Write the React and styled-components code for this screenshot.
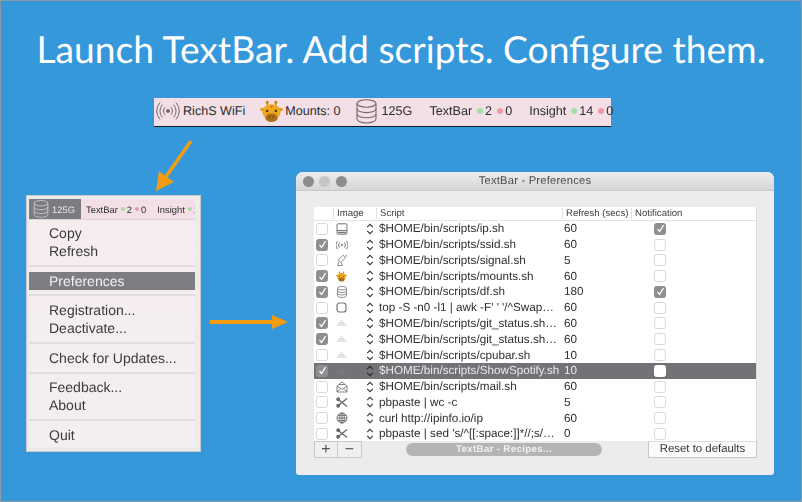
import React from 'react';
import styled, { createGlobalStyle } from 'styled-components';

const GlobalStyle = createGlobalStyle`
  html, body {
    margin: 0;
    padding: 0;
    background: #3498db;
  }
  * {
    box-sizing: border-box;
  }
`;

const Page = styled.div`
  position: relative;
  width: 802px;
  height: 502px;
  border: 1px solid #8e9aa3;
  background: #3498db;
  font-family: 'Liberation Sans', Arial, sans-serif;
  text-rendering: geometricPrecision;
  overflow: hidden;
`;

const Title = styled.h1`
  margin: 0;
  padding: 26px 0 26px;
  height: 97px;
  font-family: Lato, sans-serif;
  font-weight: 400;
  font-size: 37.2px;
  line-height: 44px;
  color: #fff;
  text-align: center;
  white-space: nowrap;
`;

const Strip = styled.div`
  display: flex;
  align-items: center;
  width: 457px;
  height: 29px;
  margin-left: 153px;
  padding-bottom: 2px;
  background: #f3e0e6;
  border-bottom: 1px solid #1c1c1c;
  font-size: 12.6px;
  color: #2c2c2c;
  filter: blur(0.3px);
`;

const StripText = styled.span`
  flex: none;
  margin-left: ${({ $gap }) => $gap || 0}px;
  white-space: nowrap;
`;

const IconWrap = styled.div`
  display: flex;
  flex: none;
  margin-left: ${({ $gap }) => $gap || 0}px;
`;

const Dot = styled.i`
  flex: none;
  width: ${({ $small }) => ($small ? 4 : 6)}px;
  height: ${({ $small }) => ($small ? 4 : 6)}px;
  margin: 0 2px 0 ${({ $small }) => ($small ? 3 : 5)}px;
  border-radius: 50%;
  background: ${({ $red }) => ($red ? '#f19aa6' : '#a3dfa3')};
`;

const Lower = styled.div`
  display: flex;
  align-items: flex-start;
  margin-top: 45px;
  padding-left: 25px;
`;

/* popup menu */
const Popup = styled.div`
  flex: none;
  width: 175px;
  height: 257px;
  margin-top: 23px;
  padding: 3px 5px 4px 2px;
  border: 1px solid #c9c9cb;
  background: #ececec;
  filter: blur(0.3px);
`;

const MenuPanel = styled.div`
  height: 248px;
  border-radius: 0 0 4px 4px;
  background: linear-gradient(#f6ecee, #f3efef);
  overflow: hidden;
`;

const PopupBar = styled.div`
  display: flex;
  align-items: center;
  height: 21px;
  background: #f3e0e6;
  border-bottom: 1px solid #d9d2d6;
  font-size: 9.4px;
  color: #2e2e2e;
  overflow: hidden;
  white-space: nowrap;
`;

const ActiveItem = styled.div`
  display: flex;
  align-items: center;
  gap: 3px;
  flex: none;
  width: 52px;
  height: 21px;
  padding-left: 4px;
  margin-right: 5px;
  background: #7b7b80;
  color: #e8e8e8;
`;

const MenuList = styled.div`
  padding-top: 4px;
`;

const MenuItem = styled.div`
  height: 18px;
  padding-left: 20px;
  font-size: 14px;
  line-height: 18px;
  color: ${({ $active }) => ($active ? '#f2f2f2' : '#3b3a3c')};
  background: ${({ $active }) => ($active ? '#7d7d82' : 'transparent')};
`;

const MenuSep = styled.div`
  height: 11.6px;
  display: flex;
  align-items: center;
  &::after {
    content: '';
    width: 100%;
    height: 2px;
    background: #e2dcdd;
  }
`;

const SideArrow = styled.svg`
  flex: none;
  width: 78px;
  height: 14px;
  margin: 143px 8px 0 9px;
`;

const DownArrow = styled.svg`
  position: absolute;
  left: 152px;
  top: 137px;
  width: 42px;
  height: 54px;
`;

/* preferences window */
const Win = styled.div`
  flex: none;
  width: 478px;
  height: 303px;
  background: #ececec;
  border-radius: 7px 7px 3px 3px;
  overflow: hidden;
  filter: blur(0.3px);
`;

const WinBar = styled.div`
  position: relative;
  display: flex;
  align-items: center;
  justify-content: center;
  height: 19px;
  background: linear-gradient(#ececec, #d6d6d6);
  border-bottom: 1px solid #c9c9c9;
  font-size: 11.2px;
  letter-spacing: 0.2px;
  color: #4c4c4c;
`;

const Lights = styled.div`
  position: absolute;
  left: 6.5px;
  top: 4px;
  display: flex;
  gap: 5.5px;
`;

const Light = styled.i`
  width: 11px;
  height: 11px;
  border-radius: 50%;
  background: ${({ $dim }) => ($dim ? '#c6c6c6' : '#8d8d8f')};
`;

const WinBody = styled.div`
  padding: 16px 17px 0 18px;
`;

const Table = styled.div`
  background: #fff;
  height: 234px;
  border-right: 1px solid #dcdcdc;
`;

const Columns = styled.div`
  display: grid;
  grid-template-columns: 19px 43px 186px 69px 126px;
  align-items: center;
`;

const Head = styled(Columns)`
  height: 14px;
  border-bottom: 1px solid #e4e4e4;
  font-size: 9.6px;
  color: #3e3e3e;
`;

const HeadCell = styled.span`
  height: 11px;
  line-height: 11px;
  padding-left: 3px;
  border-left: ${({ $first }) => ($first ? 'none' : '1px solid #e2e2e2')};
  white-space: nowrap;
`;

const Row = styled(Columns)`
  height: 15.77px;
  font-size: 11.7px;
  color: ${({ $selected }) => ($selected ? '#e9e9ea' : '#2f2f2f')};
  background: ${({ $selected }) => ($selected ? '#737377' : 'transparent')};
`;

const CheckCell = styled.div`
  display: flex;
  align-items: center;
  padding-left: ${({ $notify }) => ($notify ? '23px' : '2px')};
`;

const Box = styled.div`
  display: flex;
  align-items: center;
  justify-content: center;
  width: 12px;
  height: 12px;
  border-radius: 2.5px;
  border: 1px solid ${({ $on, $white }) => ($white ? '#fff' : $on ? '#8f8e93' : '#d8d8d8')};
  background: ${({ $on, $white }) => ($white ? '#fff' : $on ? '#8f8e93' : '#fff')};
`;

const ImageCell = styled.div`
  display: flex;
  align-items: center;
  padding-left: 2px;
  gap: 18px;
`;

const IconSlot = styled.div`
  display: flex;
  align-items: center;
  justify-content: center;
  flex: none;
  width: 13px;
  height: 13px;
`;

const ScriptCell = styled.div`
  padding-left: 3px;
  white-space: nowrap;
  overflow: hidden;
`;

const NumberCell = styled.div`
  padding-left: 2px;
`;

const BottomBar = styled.div`
  display: flex;
  align-items: flex-start;
  height: 17px;
`;

const SquareButton = styled.div`
  display: flex;
  align-items: center;
  justify-content: center;
  width: ${({ $wide }) => ($wide ? 25 : 24)}px;
  height: 17px;
  margin-left: ${({ $wide }) => ($wide ? -1 : 0)}px;
  background: #f0f0f0;
  border: 1px solid #c8c8c8;
  font-size: 16px;
  color: #555;
`;

const RecipesPill = styled.div`
  width: 196px;
  height: 13px;
  margin: 2px 0 0 44px;
  border-radius: 7px;
  background: #b4b4b4;
  color: #f0f0f0;
  font-size: 9.8px;
  font-weight: bold;
  letter-spacing: 0.3px;
  line-height: 13px;
  text-align: center;
`;

const ResetButton = styled.div`
  width: 109px;
  height: 17px;
  margin-left: auto;
  background: #fbfbfb;
  border: 1px solid #c8c8c8;
  border-top-color: #dedede;
  font-size: 11.4px;
  line-height: 15px;
  color: #333;
  text-align: center;
`;

/* drawings */
const WifiIcon = () => (
  <svg width="24" height="22" viewBox="0 0 24 22" fill="none" stroke="#77666c" strokeWidth="1" strokeLinecap="round">
    <circle cx="12" cy="11" r="1.5" fill="#77666c" />
    <path d="M8.8 7.5a5 5 0 0 0 0 7M15.2 7.5a5 5 0 0 1 0 7" />
    <path d="M6.2 5a8.6 8.6 0 0 0 0 12M17.8 5a8.6 8.6 0 0 1 0 12" />
    <path d="M3.8 2.8a12 12 0 0 0 0 16.4M20.2 2.8a12 12 0 0 1 0 16.4" />
  </svg>
);

const GiraffeIcon = ({ size = 23 }) => (
  <svg width={size} height={size} viewBox="0 0 24 24">
    <circle cx="7.5" cy="2.5" r="1.6" fill="#c97f12" />
    <circle cx="16.5" cy="2.5" r="1.6" fill="#c97f12" />
    <rect x="6.8" y="3" width="1.5" height="5" fill="#d98f16" />
    <rect x="15.8" y="3" width="1.5" height="5" fill="#d98f16" />
    <ellipse cx="2.8" cy="10" rx="2.8" ry="1.8" fill="#e39c1c" />
    <ellipse cx="21.2" cy="10" rx="2.8" ry="1.8" fill="#e39c1c" />
    <ellipse cx="12" cy="12.5" rx="9.5" ry="8" fill="#efa81f" />
    <circle cx="12" cy="7" r="1.3" fill="#c97f12" />
    <circle cx="7.5" cy="11.5" r="1.3" fill="#4a3312" />
    <circle cx="16.5" cy="11.5" r="1.3" fill="#4a3312" />
    <ellipse cx="12" cy="18.5" rx="6.5" ry="4.5" fill="#a9701c" />
    <circle cx="10" cy="17.5" r="0.7" fill="#4a3312" />
    <circle cx="14" cy="17.5" r="0.7" fill="#4a3312" />
  </svg>
);

const DbIcon = ({ width = 21, height = 25, color = '#77666c', stroke = 1.1 }) => (
  <svg width={width} height={height} viewBox="0 0 21 25" fill="none" stroke={color} strokeWidth={stroke}>
    <ellipse cx="10.5" cy="4.5" rx="9.5" ry="3.7" />
    <path d="M1 4.5v15.6c0 2.1 4.2 3.9 9.5 3.9s9.5-1.8 9.5-3.9V4.5" />
    <path d="M1 9.8c0 2.1 4.2 3.8 9.5 3.8s9.5-1.7 9.5-3.8" />
    <path d="M1 15c0 2.1 4.2 3.8 9.5 3.8s9.5-1.7 9.5-3.8" />
  </svg>
);

const Stepper = ({ color = '#333' }) => (
  <svg width="8" height="12" viewBox="0 0 8 12" fill="none" stroke={color} strokeWidth="1.1">
    <path d="M1.2 4.2 4 1.4l2.8 2.8M1.2 7.8 4 10.6l2.8-2.8" />
  </svg>
);

const CheckMark = ({ color = '#fff' }) => (
  <svg width="9" height="9" viewBox="0 0 9 9" fill="none" stroke={color} strokeWidth="1.2">
    <path d="M1.5 5 3.6 7.4 7.6 1.2" />
  </svg>
);

const rowIcons = {
  disk: (
    <svg width="12" height="12" viewBox="0 0 12 12" fill="none" stroke="#77777b">
      <rect x="1" y="0.8" width="10" height="10.4" rx="1" />
      <path d="M1 7.5h10" />
      <path d="M2 9.4h8" strokeWidth="1.5" />
    </svg>
  ),
  wifi: (
    <svg width="12" height="10" viewBox="0 0 12 10" fill="none" stroke="#9c9ca0" strokeWidth="1.2">
      <circle cx="6" cy="5" r="0.7" fill="#9c9ca0" />
      <path d="M3.8 2.5a3.6 3.6 0 0 0 0 5M8.2 2.5a3.6 3.6 0 0 1 0 5M1.6 1a6.4 6.4 0 0 0 0 8M10.4 1a6.4 6.4 0 0 1 0 8" />
    </svg>
  ),
  signal: (
    <svg width="12" height="13" viewBox="0 0 12 13" fill="none" stroke="#808084" strokeWidth="0.9">
      <path d="M7 1.2l2.6 2.4-4.8 5-2.6-2.4zM3 7.5 1.5 11.6h5L5.2 8.6M9.5 1a2 2 0 0 1 1.5 1.6" />
    </svg>
  ),
  giraffe: <GiraffeIcon size={11} />,
  db: <DbIcon width={10} height={12} color="#77777b" stroke={1.7} />,
  square: (
    <svg width="11" height="11" viewBox="0 0 11 11" fill="none" stroke="#77777b" strokeWidth="1.2">
      <rect x="1" y="1" width="9" height="9" rx="2.6" />
    </svg>
  ),
  dots: (
    <svg width="11" height="6" viewBox="0 0 11 6" fill="none" stroke="#a6a6a9">
      <path d="M4.5 1h2M2.5 3h6M1 5h9" strokeDasharray="1 0.6" />
    </svg>
  ),
  dim: (
    <svg width="11" height="6" viewBox="0 0 11 6" fill="none" stroke="#828286">
      <path d="M4.5 1h2M2.5 3h6M1 5h9" strokeDasharray="1 0.6" />
    </svg>
  ),
  mail: (
    <svg width="12" height="12" viewBox="0 0 12 12" fill="none" stroke="#77777b" strokeWidth="0.9">
      <path d="M1 5 6 1l5 4v6H1zM1 5l5 3.4L11 5M1 11l3.6-4M11 11 7.4 7M3 3.5h6" />
    </svg>
  ),
  cut: (
    <svg width="12" height="11" viewBox="0 0 12 11" fill="none" stroke="#68686c" strokeWidth="1.3">
      <path d="M3 3 11 9.5M3 8 11 1.5" />
      <circle cx="2.2" cy="2.2" r="1.3" fill="#68686c" />
      <circle cx="2.2" cy="8.8" r="1.3" fill="#68686c" />
    </svg>
  ),
  globe: (
    <svg width="12" height="12" viewBox="0 0 12 12" fill="none" stroke="#68686c" strokeWidth="0.9">
      <circle cx="6" cy="6" r="5" />
      <ellipse cx="6" cy="6" rx="2.3" ry="5" />
      <path d="M6 1v10M1 6h10M1.8 3.4h8.4M1.8 8.6h8.4" />
    </svg>
  ),
};

const rows = [
  { on: false, icon: 'disk', script: '$HOME/bin/scripts/ip.sh', secs: '60', notify: true },
  { on: true, icon: 'wifi', script: '$HOME/bin/scripts/ssid.sh', secs: '60' },
  { on: false, icon: 'signal', script: '$HOME/bin/scripts/signal.sh', secs: '5' },
  { on: true, icon: 'giraffe', script: '$HOME/bin/scripts/mounts.sh', secs: '60' },
  { on: true, icon: 'db', script: '$HOME/bin/scripts/df.sh', secs: '180', notify: true },
  { on: false, icon: 'square', script: "top -S -n0 -l1 | awk -F' ' '/^Swap…", secs: '60' },
  { on: true, icon: 'dots', script: '$HOME/bin/scripts/git_status.sh…', secs: '60' },
  { on: true, icon: 'dots', script: '$HOME/bin/scripts/git_status.sh…', secs: '60' },
  { on: false, icon: 'dots', script: '$HOME/bin/scripts/cpubar.sh', secs: '10' },
  { on: true, icon: 'dim', script: '$HOME/bin/scripts/ShowSpotify.sh', secs: '10', selected: true },
  { on: false, icon: 'mail', script: '$HOME/bin/scripts/mail.sh', secs: '60' },
  { on: false, icon: 'cut', script: 'pbpaste | wc -c', secs: '5' },
  { on: false, icon: 'globe', script: 'curl http://ipinfo.io/ip', secs: '60' },
  { on: false, icon: 'cut', script: "pbpaste | sed 's/^[[:space:]]*//;s/…", secs: '0' },
];

const Counter = ({ good, bad, small }) => (
  <>
    <Dot $small={small} />
    <StripText>{good}</StripText>
    {bad && (
      <>
        <Dot $small={small} $red />
        <StripText>{bad}</StripText>
      </>
    )}
  </>
);

export default function App() {
  return (
    <Page>
      <GlobalStyle />
      <Title>Launch TextBar. Add scripts. Configure them.</Title>

      <Strip>
        <IconWrap $gap={2}>
          <WifiIcon />
        </IconWrap>
        <StripText $gap={3}>RichS WiFi</StripText>
        <IconWrap $gap={15}>
          <GiraffeIcon />
        </IconWrap>
        <StripText $gap={2}>Mounts: 0</StripText>
        <IconWrap $gap={15}>
          <DbIcon />
        </IconWrap>
        <StripText $gap={5}>125G</StripText>
        <StripText $gap={17}>TextBar</StripText>
        <Counter good="2" bad="0" />
        <StripText $gap={17}>Insight</StripText>
        <Counter good="14" bad="0" />
      </Strip>

      <DownArrow viewBox="0 0 42 54">
        <path d="M38 3 12 40" stroke="#f39c12" strokeWidth="3.5" fill="none" />
        <path d="M3 53 6 33 21 44z" fill="#f39c12" />
      </DownArrow>

      <Lower>
        <Popup>
          <MenuPanel>
            <PopupBar>
              <ActiveItem>
                <DbIcon width={16} height={18} color="#d8d8d8" />
                125G
              </ActiveItem>
              <StripText>TextBar</StripText>
              <Counter good="2" bad="0" small />
              <StripText $gap={11}>Insight</StripText>
              <Counter good="1" small />
            </PopupBar>
            <MenuList>
              <MenuItem>Copy</MenuItem>
              <MenuItem>Refresh</MenuItem>
              <MenuSep />
              <MenuItem $active>Preferences</MenuItem>
              <MenuSep />
              <MenuItem>Registration...</MenuItem>
              <MenuItem>Deactivate...</MenuItem>
              <MenuSep />
              <MenuItem>Check for Updates...</MenuItem>
              <MenuSep />
              <MenuItem>Feedback...</MenuItem>
              <MenuItem>About</MenuItem>
              <MenuSep />
              <MenuItem>Quit</MenuItem>
            </MenuList>
          </MenuPanel>
        </Popup>

        <SideArrow viewBox="0 0 78 14">
          <path d="M0 7h66" stroke="#f39c12" strokeWidth="4" />
          <path d="M78 7 62 0v14z" fill="#f39c12" />
        </SideArrow>

        <Win>
          <WinBar>
            <Lights>
              <Light />
              <Light $dim />
              <Light />
            </Lights>
            TextBar - Preferences
          </WinBar>
          <WinBody>
            <Table>
              <Head>
                <HeadCell $first />
                <HeadCell>Image</HeadCell>
                <HeadCell>Script</HeadCell>
                <HeadCell>Refresh (secs)</HeadCell>
                <HeadCell>Notification</HeadCell>
              </Head>
              {rows.map((row, i) => (
                <Row key={i} $selected={row.selected}>
                  <CheckCell>
                    <Box $on={row.on}>{row.on && <CheckMark />}</Box>
                  </CheckCell>
                  <ImageCell>
                    <IconSlot>{rowIcons[row.icon]}</IconSlot>
                    <Stepper color={row.selected ? '#2a2a2a' : '#333'} />
                  </ImageCell>
                  <ScriptCell>{row.script}</ScriptCell>
                  <NumberCell>{row.secs}</NumberCell>
                  <CheckCell $notify>
                    <Box $on={row.notify} $white={row.selected}>
                      {row.notify && <CheckMark />}
                    </Box>
                  </CheckCell>
                </Row>
              ))}
            </Table>
            <BottomBar>
              <SquareButton>+</SquareButton>
              <SquareButton $wide>−</SquareButton>
              <RecipesPill>TextBar - Recipes...</RecipesPill>
              <ResetButton>Reset to defaults</ResetButton>
            </BottomBar>
          </WinBody>
        </Win>
      </Lower>
    </Page>
  );
}
